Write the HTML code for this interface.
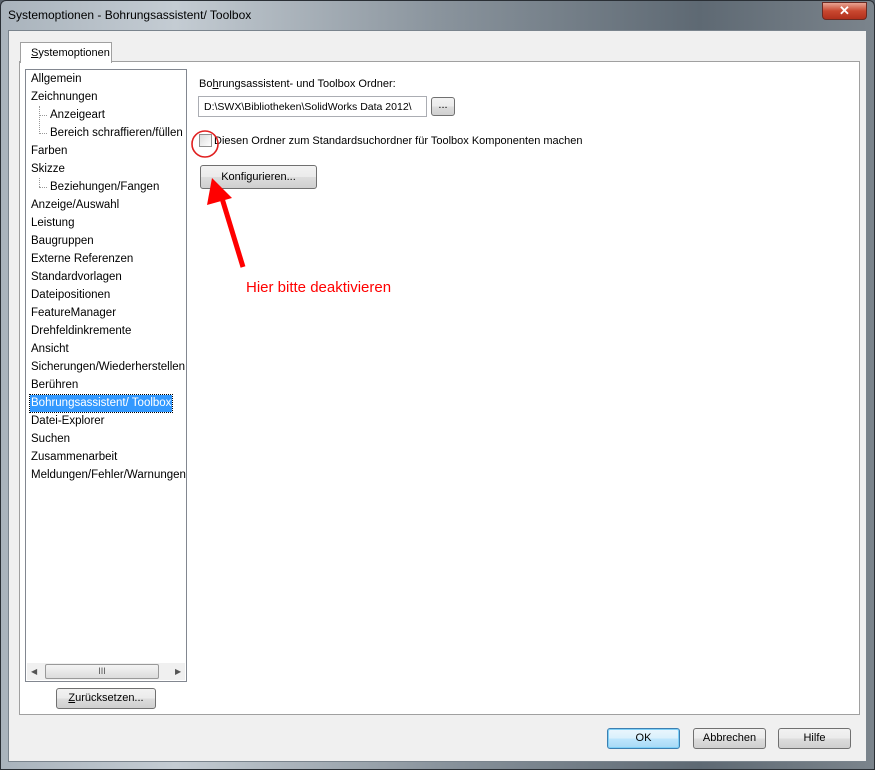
<!DOCTYPE html>
<html><head><meta charset="utf-8"><style>
*{box-sizing:border-box;margin:0;padding:0}
body{width:875px;height:770px;overflow:hidden;background:#5a636c;font-family:"Liberation Sans",sans-serif;font-size:11px;color:#000;position:relative}
.frame{position:absolute;left:0;top:0;width:875px;height:770px;border:1px solid #2a2f35;border-radius:6px 6px 0 0;background:linear-gradient(90deg,#a9b3bc 0%,#c4ccd3 20%,#8a949d 50%,#5e6973 80%,#7b848c 100%)}
.title{position:absolute;left:8px;top:8px;font-size:12px;color:#000}
.close{position:absolute;left:822px;top:2px;width:45px;height:18px;border:1px solid #6b2a22;border-radius:0 0 4px 4px;background:linear-gradient(#e8a493,#c8472f 50%,#b0301c);color:#fff;text-align:center;font-weight:bold;font-size:13px;line-height:16px}
.client{position:absolute;left:8px;top:30px;width:859px;height:732px;background:#f0f0f0;border:1px solid #7a848d}
.a{position:absolute;white-space:nowrap}
.panel{left:19px;top:61px;width:841px;height:654px;border:1px solid #a0a0a0;background:#fff}
.tab{left:20px;top:42px;width:92px;height:21px;border:1px solid #a0a0a0;border-bottom:none;background:#fff;padding:4px 0 0 10px}
.tree{left:25px;top:69px;width:162px;height:613px;border:1px solid #828790;background:#fff;overflow:hidden}
.it{position:absolute;white-space:nowrap;height:17px;line-height:17px;font-size:11.5px}
.sel{background:#3399ff;color:#fff;outline:1px dotted #000;padding:0 1px}
.btn{position:absolute;border:1px solid #707070;border-radius:3px;background:linear-gradient(#f2f2f2,#ebebeb 50%,#dddddd 51%,#cfcfcf);text-align:center;font-size:11px;white-space:nowrap}
.sb{left:1px;top:593px;width:158px;height:17px;background:#f0f0f0}
</style></head><body>
<div class="frame"></div>
<div class="title">Systemoptionen - Bohrungsassistent/ Toolbox</div>
<div class="close">✕</div>
<div class="client"></div>
<div class="a panel"></div>
<div class="a tab"><u>S</u>ystemoptionen</div>
<div class="a tree">
<div class="it" style="left:5px;top:1px">Allgemein</div>
<div class="it" style="left:5px;top:19px">Zeichnungen</div>
<div class="it" style="left:24px;top:37px">Anzeigeart</div>
<div class="it" style="left:24px;top:55px">Bereich schraffieren/füllen</div>
<div class="a" style="left:13px;top:36px;width:1px;height:28px;border-left:1px dotted #999"></div>
<div class="a" style="left:13px;top:45px;width:8px;border-top:1px dotted #999"></div>
<div class="a" style="left:13px;top:63px;width:8px;border-top:1px dotted #999"></div>
<div class="it" style="left:5px;top:73px">Farben</div>
<div class="it" style="left:5px;top:91px">Skizze</div>
<div class="a" style="left:13px;top:108px;width:1px;height:9px;border-left:1px dotted #999"></div>
<div class="a" style="left:13px;top:117px;width:8px;border-top:1px dotted #999"></div>
<div class="it" style="left:24px;top:109px">Beziehungen/Fangen</div>
<div class="it" style="left:5px;top:127px">Anzeige/Auswahl</div>
<div class="it" style="left:5px;top:145px">Leistung</div>
<div class="it" style="left:5px;top:163px">Baugruppen</div>
<div class="it" style="left:5px;top:181px">Externe Referenzen</div>
<div class="it" style="left:5px;top:199px">Standardvorlagen</div>
<div class="it" style="left:5px;top:217px">Dateipositionen</div>
<div class="it" style="left:5px;top:235px">FeatureManager</div>
<div class="it" style="left:5px;top:253px">Drehfeldinkremente</div>
<div class="it" style="left:5px;top:271px">Ansicht</div>
<div class="it" style="left:5px;top:289px">Sicherungen/Wiederherstellen</div>
<div class="it" style="left:5px;top:307px">Berühren</div>
<div class="it sel" style="left:4px;top:325px">Bohrungsassistent/ Toolbox</div>
<div class="it" style="left:5px;top:343px">Datei-Explorer</div>
<div class="it" style="left:5px;top:361px">Suchen</div>
<div class="it" style="left:5px;top:379px">Zusammenarbeit</div>
<div class="it" style="left:5px;top:397px">Meldungen/Fehler/Warnungen</div>
<div class="a sb">
<div class="a" style="left:4px;top:4px;font-size:8px;color:#555">◀</div>
<div class="a" style="left:18px;top:1px;width:114px;height:15px;border:1px solid #999;border-radius:2px;background:linear-gradient(#f4f4f4,#dcdcdc);text-align:center;font-size:9px;line-height:13px;color:#555">III</div>
<div class="a" style="left:148px;top:4px;font-size:8px;color:#555">▶</div>
</div>
</div>
<div class="btn" style="left:56px;top:688px;width:100px;height:21px;line-height:19px"><u>Z</u>urücksetzen...</div>
<div class="a" style="left:199px;top:78px">Bo<u>h</u>rungsassistent- und Toolbox Ordner:</div>
<div class="a" style="left:198px;top:96px;width:229px;height:21px;border:1px solid #abadb3;background:#fff;padding:4px 0 0 5px;font-size:10.5px">D:\SWX\Bibliotheken\SolidWorks Data 2012\</div>
<div class="btn" style="left:431px;top:97px;width:24px;height:19px;line-height:15px">...</div>
<div class="a" style="left:199px;top:134px;width:13px;height:13px;border:1px solid #8f8f8f;background:linear-gradient(135deg,#dcdcdc,#fff)"></div>
<div class="a" style="left:214px;top:135px">Diesen Ordner zum Standardsuchordner für Toolbox Komponenten machen</div>
<div class="btn" style="left:200px;top:165px;width:117px;height:24px;line-height:22px">Konfigurieren...</div>
<svg class="a" style="left:0;top:0" width="875" height="770">
<circle cx="205" cy="144" r="13" fill="none" stroke="#e02020" stroke-width="1.6"/>
<line x1="243" y1="267" x2="221" y2="195" stroke="#f00" stroke-width="5"/>
<polygon points="212,178 207,205 232,198" fill="#f00"/>
</svg>
<div class="a" style="left:246px;top:279px;color:#f00;font-size:15px">Hier bitte deaktivieren</div>
<div class="btn" style="left:607px;top:728px;width:73px;height:21px;line-height:19px;border-color:#3c7fb1;background:linear-gradient(#eaf6fd,#d9f0fc 50%,#bee6fd 51%,#a7d9f5);box-shadow:inset 0 0 0 1px #7fd0f7">OK</div>
<div class="btn" style="left:693px;top:728px;width:73px;height:21px;line-height:19px">Abbrechen</div>
<div class="btn" style="left:778px;top:728px;width:73px;height:21px;line-height:19px">Hilfe</div>
</body></html>
